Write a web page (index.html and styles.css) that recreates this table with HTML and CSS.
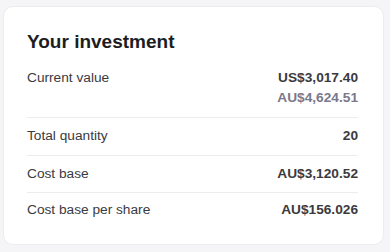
FILE: index.html
```html
<!DOCTYPE html>
<html lang="en">
<head>
<meta charset="utf-8">
<link rel="stylesheet" href="styles.css">
</head>
<body>
<section class="card">
  <h2 class="title">Your investment</h2>
  <div class="rows">
    <div class="row">
      <span class="label">Current value</span>
      <span class="values">
        <span class="value">US$3,017.40</span>
        <span class="value sub">AU$4,624.51</span>
      </span>
    </div>
    <div class="row">
      <span class="label">Total quantity</span>
      <span class="value">20</span>
    </div>
    <div class="row">
      <span class="label">Cost base</span>
      <span class="value">AU$3,120.52</span>
    </div>
    <div class="row">
      <span class="label">Cost base per share</span>
      <span class="value">AU$156.026</span>
    </div>
  </div>
</section>
</body>
</html>
```

FILE: styles.css
```css
html, body {
  margin: 0;
  background: #f5f5f7;
}
body {
  padding: 6px 6px 7px 3px;
  font-family: "Liberation Sans", Arial, sans-serif;
}
.card {
  background: #ffffff;
  border: 1px solid #ececef;
  border-radius: 10px;
  padding: 23px 25px 15px 23px;
  height: 239px;
  box-sizing: border-box;
}
.title {
  margin: 0 0 6px;
  font-size: 19px;
  line-height: 24px;
  font-weight: 700;
  color: #1d1d1f;
}
.rows {
  display: flex;
  flex-direction: column;
}
.row {
  display: flex;
  justify-content: space-between;
  align-items: flex-start;
  padding: 8px 0 9px;
  border-bottom: 1px solid #ececef;
  font-size: 13.7px;
  line-height: 20px;
}
.row:nth-child(3) {
  padding-bottom: 8px;
}
.row:last-child {
  border-bottom: none;
  padding-top: 7px;
}
.label {
  color: #3a3a3e;
}
.values {
  display: flex;
  flex-direction: column;
  align-items: flex-end;
}
.value {
  font-weight: 700;
  color: #3a3a3e;
}
.value.sub {
  color: #7a788a;
}
```
